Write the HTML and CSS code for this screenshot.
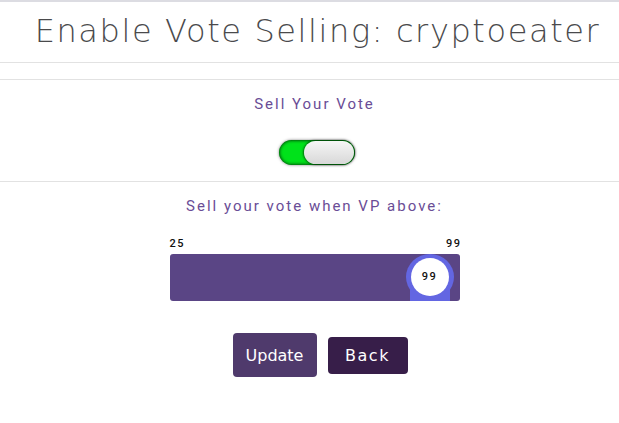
FILE: index.html
```html
<!DOCTYPE html>
<html>
<head>
    <title>Enable Vote Selling</title>
    <link rel="stylesheet" href="styles.css">
</head>
<body>
    <div class="page-header">
        <h1>Enable Vote Selling: cryptoeater</h1>
    </div>
    <div class="spacer"></div>

    <div class="section toggle-section">
        <p class="label">Sell Your Vote</p>
        <label class="switch">
            <input type="checkbox" checked>
            <span class="switch-track"><span class="switch-knob"></span></span>
        </label>
    </div>

    <div class="section slider-section">
        <p class="label">Sell your vote when VP above:</p>
        <div class="slider">
            <div class="slider-limits">
                <span>25</span>
                <span>99</span>
            </div>
            <div class="slider-bar">
                <div class="slider-thumb"><span>99</span></div>
            </div>
        </div>
        <div class="buttons">
            <button class="btn btn-update">Update</button>
            <button class="btn btn-back">Back</button>
        </div>
    </div>
</body>
</html>
```

FILE: styles.css
```css
body {
    font-family: Roboto, "Liberation Sans", sans-serif;
    margin: 0;
    background-color: #fff;
}

.page-header {
    border-top: 2px solid #dcdce2;
    border-bottom: 1px solid #e2e2e2;
    height: 60px;
    text-align: center;
}

.page-header h1 {
    margin: 0;
    padding: 10px 0 0 16px;
    font-family: "DejaVu Sans", sans-serif;
    font-weight: 200;
    font-size: 32px;
    letter-spacing: 1.6px;
    color: #4a4a4c;
}

.spacer {
    height: 16px;
    border-bottom: 1px solid #e2e2e2;
}

.section {
    text-align: center;
    padding-left: 10px;
}

.toggle-section {
    border-bottom: 1px solid #e2e2e2;
}

.label {
    margin: 0;
    padding-top: 15px;
    font-size: 15px;
    letter-spacing: 2px;
    color: #6a4d96;
}

.switch {
    display: inline-block;
    margin: 27px 0 12px 4px;
}

.switch input {
    display: none;
}

.switch-track {
    display: block;
    position: relative;
    width: 76px;
    height: 25px;
    border-radius: 13px;
    background-color: #00e21a;
    box-shadow: inset 0 0 3px 1px rgba(0, 0, 0, 0.6), 0 0 3px rgba(0, 0, 0, 0.5);
}

.switch-knob {
    position: absolute;
    right: 1px;
    top: 1px;
    width: 50px;
    height: 23px;
    border-radius: 12px;
    background: linear-gradient(to bottom, #f6f6f6, #d8d8d8);
    box-shadow: 0 0 2px 1px rgba(0, 0, 0, 0.55);
}

.slider-section .label {
    padding-top: 15px;
}

.slider {
    width: 290px;
    margin: 22px auto 0;
}

.slider-limits {
    display: flex;
    justify-content: space-between;
    font-size: 11px;
    font-weight: 500;
    letter-spacing: 1.5px;
    color: #111;
    line-height: 14px;
}

.slider-limits span:last-child {
    margin-right: -2px;
}

.slider-bar {
    position: relative;
    margin-top: 3px;
    height: 47px;
    border-radius: 3px;
    background-color: #5a4585;
}

.slider-thumb {
    position: absolute;
    left: 236px;
    top: 0;
    width: 48px;
    height: 47px;
}

.slider-thumb::before {
    content: "";
    position: absolute;
    left: 0;
    top: 0;
    width: 48px;
    height: 46px;
    border-radius: 50%;
    background-color: #6366e2;
}

.slider-thumb::after {
    content: "";
    position: absolute;
    left: 4px;
    bottom: 0;
    width: 40px;
    height: 18px;
    background-color: #6366e2;
}

.slider-thumb span {
    position: absolute;
    z-index: 1;
    left: 5px;
    top: 4px;
    width: 38px;
    height: 38px;
    border-radius: 50%;
    background-color: #fff;
    font-size: 11px;
    font-weight: 500;
    letter-spacing: 1.5px;
    line-height: 38px;
    text-align: center;
    color: #111;
}

.buttons {
    display: flex;
    justify-content: center;
    align-items: center;
    gap: 11px;
    margin-top: 32px;
    margin-left: 11px;
}

.btn {
    border: none;
    border-radius: 4px;
    color: #fff;
    font-family: "DejaVu Sans", sans-serif;
    font-size: 16px;
    cursor: pointer;
}

.btn-update {
    width: 84px;
    height: 44px;
    background-color: #4f3a6c;
}

.btn-back {
    width: 80px;
    height: 37px;
    background-color: #371e49;
    letter-spacing: 1.5px;
}
```
